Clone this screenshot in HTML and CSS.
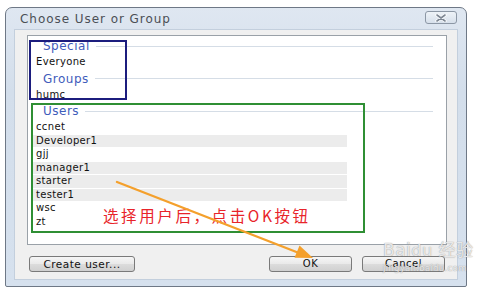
FILE: index.html
```html
<!DOCTYPE html>
<html>
<head>
<meta charset="utf-8">
<link rel="stylesheet" href="styles.css">
</head>
<body>
<div class="window">
  <div class="titlebar">
    <span class="title">Choose User or Group</span>
    <span class="close"><svg width="14" height="8" viewBox="0 0 14 8"><path d="M3 1 L11 7 M11 1 L3 7" stroke="#fff" stroke-width="3.2" stroke-linecap="round"/><path d="M3 1 L11 7 M11 1 L3 7" stroke="#7d8794" stroke-width="1.6" stroke-linecap="round"/></svg></span>
  </div>
  <div class="client">
    <div class="list">
      <div class="head"><span>Special</span><i></i></div>
      <div class="item">Everyone</div>
      <div class="head"><span>Groups</span><i></i></div>
      <div class="item">humc</div>
      <div class="head"><span>Users</span><i></i></div>
      <div class="item">ccnet</div>
      <div class="item alt">Developer1</div>
      <div class="item">gjj</div>
      <div class="item alt">manager1</div>
      <div class="item alt">starter</div>
      <div class="item alt">tester1</div>
      <div class="item">wsc</div>
      <div class="item">zt</div>
    </div>
    <div class="buttons">
      <button class="btn create">Create user...</button>
      <span class="spacer"></span>
      <button class="btn">OK</button>
      <button class="btn">Cancel</button>
    </div>
  </div>
</div>

<div class="mark mark-blue"></div>
<div class="mark mark-green"></div>
<div class="note">选择用户后，点击OK按钮</div>
<svg class="arrow" width="500" height="293" viewBox="0 0 500 293">
  <line x1="117" y1="182" x2="299" y2="253" stroke="#f4a02c" stroke-width="2.4" stroke-linecap="round"/>
  <polygon points="313,258 294.5,257.8 299.5,245.5" fill="#f4a02c"/>
</svg>
<div class="watermark">
  <div class="wm-big">Bai<span class="paw">du</span> 经验</div>
  <div class="wm-small">jingyan.baidu.com</div>
</div>
</body>
</html>
```
FILE: styles.css
```css
html, body {
  margin: 0;
  padding: 0;
  background: #ffffff;
  width: 500px;
  height: 293px;
  overflow: hidden;
  font-family: "DejaVu Sans", Verdana, sans-serif;
}

.window {
  margin: 7px 0 0 5px;
  width: 462px;
  height: 280px;
  box-sizing: border-box;
  border: 1px solid #6e7886;
  border-radius: 7px 7px 2px 2px;
  background: linear-gradient(180deg, #dfe7f1 0%, #d3deeb 30%, #d6e1ee 100%);
  padding: 0 8px 6px 8px;
  display: flex;
  flex-direction: column;
}

.titlebar {
  height: 21px;
  display: flex;
  align-items: center;
  justify-content: space-between;
  padding: 0 1px 0 6px;
}

.title {
  font-size: 12px;
  letter-spacing: 0.95px;
  color: #4b4f55;
  margin-top: 1px;
}

.close {
  width: 30px;
  height: 11px;
  border: 1px solid #8c97a5;
  border-radius: 3px;
  background: linear-gradient(180deg, #eef3f8 0%, #d7e0eb 100%);
  display: flex;
  align-items: center;
  justify-content: center;
  margin-top: -2px;
}

.close svg { display: block; }

.client {
  flex: 1;
  background: #f0f0f0;
  border: 1px solid #c3cfdd;
  padding: 5px 10px 0 12px;
  display: flex;
  flex-direction: column;
}

.list {
  height: 210px;
  box-sizing: border-box;
  background: #ffffff;
  border: 1px solid #9aa1a8;
  padding: 0 0 0 5px;
}

.head {
  height: 19px;
  display: flex;
  align-items: center;
  padding: 1px 13px 0 10px;
  box-sizing: border-box;
}

.head span {
  font-size: 12px;
  letter-spacing: 0.5px;
  color: #3f5cbb;
}

.head i {
  flex: 1;
  height: 1px;
  background: #d5dde6;
  margin-left: 6px;
}

.item {
  height: 13.5px;
  line-height: 13.5px;
  width: 314px;
  box-sizing: border-box;
  padding-left: 3px;
  font-size: 10px;
  letter-spacing: 0.35px;
  color: #111111;
}

.item.alt {
  background: #ececec;
  border-top: 1px solid #ffffff;
  line-height: 12.5px;
}

.buttons {
  display: flex;
  align-items: center;
  gap: 10px;
  margin-top: 11px;
  padding: 0 2px 0 2px;
}

.spacer { flex: 1; }

.btn {
  height: 16px;
  width: 83px;
  box-sizing: border-box;
  border: 1px solid #7a7a7a;
  border-radius: 3px;
  background: linear-gradient(180deg, #f6f6f6 0%, #e9e9e9 50%, #dcdcdc 51%, #d0d0d0 100%);
  font-family: "DejaVu Sans", Verdana, sans-serif;
  font-size: 10px;
  letter-spacing: 0.5px;
  color: #111;
  padding: 0;
  line-height: 14px;
}

.btn.create { width: 106px; font-size: 10.5px; }

/* annotation overlays */
.mark {
  position: absolute;
  box-sizing: border-box;
  border: 2px solid;
}

.mark-blue {
  left: 29px;
  top: 40px;
  width: 98px;
  height: 60px;
  border-color: #1c1d7e;
}

.mark-green {
  left: 31px;
  top: 103px;
  width: 334px;
  height: 130px;
  border-color: #2f8f34;
}

.note {
  position: absolute;
  left: 103px;
  top: 205px;
  font-family: "Noto Sans CJK SC", sans-serif;
  font-size: 15.5px;
  line-height: 20px;
  letter-spacing: 2.6px;
  color: #e8242a;
}

.arrow {
  position: absolute;
  left: 0;
  top: 0;
  pointer-events: none;
}

.watermark {
  position: absolute;
  left: 383px;
  top: 241px;
  white-space: nowrap;
  color: rgba(255, 255, 255, 0.75);
  text-shadow: 0 0 1px rgba(150, 150, 150, 0.7), 0 0 1px rgba(150, 150, 150, 0.7);
}

.wm-big {
  font-family: "DejaVu Sans", "Noto Sans CJK SC", sans-serif;
  font-size: 17px;
  line-height: 18px;
  height: 18px;
  letter-spacing: 0.5px;
}

.wm-big .paw { font-size: 16px; }

.wm-small {
  font-family: "DejaVu Sans", sans-serif;
  font-size: 8.5px;
  line-height: 9px;
  margin-top: 5px;
  letter-spacing: 0.3px;
}
```
